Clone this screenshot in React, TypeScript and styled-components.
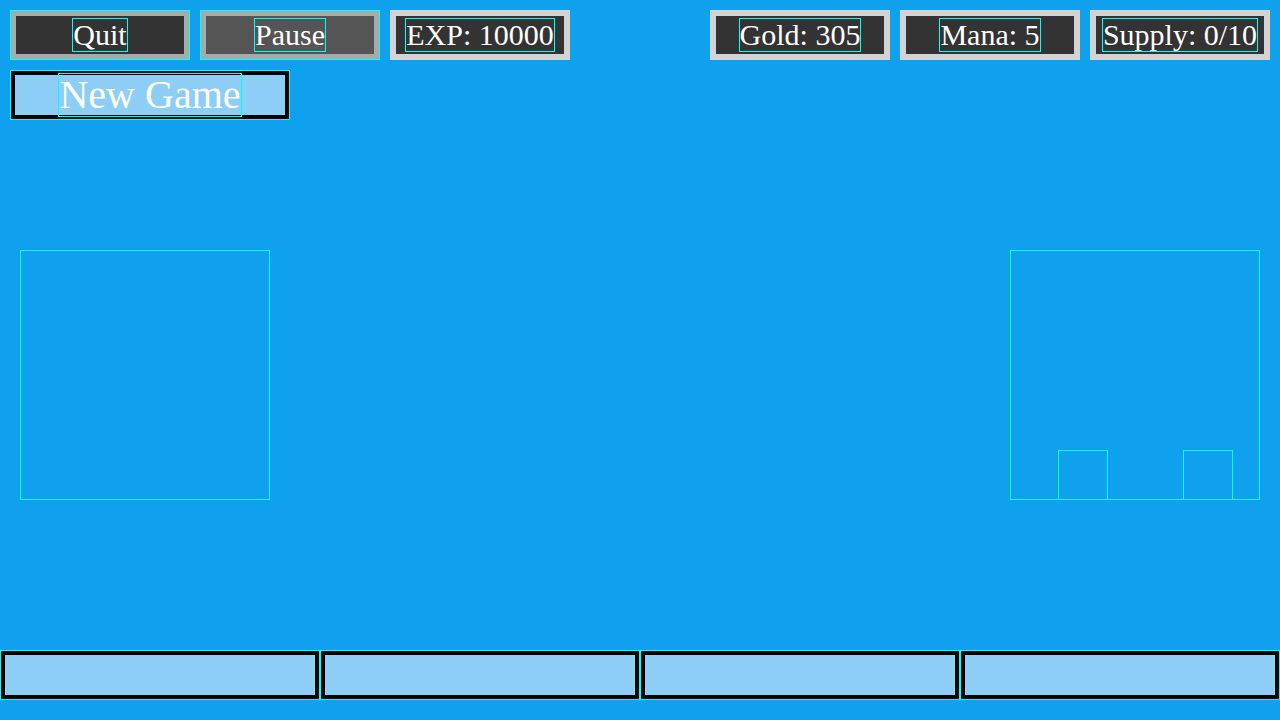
import React from "react";
import styled, { createGlobalStyle } from "styled-components";

const GlobalStyle = createGlobalStyle`
    * {
        box-sizing: border-box;
    }
    html, body {
        margin: 0;
        padding: 0;
        background: #0fa0ee;
    }
`;

const Screen = styled.div`
    width: 1280px;
    height: 720px;
    overflow: hidden;
    background: #0fa0ee;
    font-family: "Liberation Serif", "Times New Roman", serif;
    color: #ffffff;
    display: flex;
    flex-direction: column;
`;

const TopBar = styled.header`
    display: flex;
    justify-content: space-between;
    padding: 10px;
`;

const Group = styled.div`
    display: flex;
    gap: 10px;
`;

// stat boxes and the two top buttons share one shape, only edge and fill differ
const Box = styled.div<{ $edge: string; $fill: string; $outlined?: boolean }>`
    width: 180px;
    height: 50px;
    border: 6px solid ${(p) => p.$edge};
    background: ${(p) => p.$fill};
    display: flex;
    align-items: center;
    justify-content: center;
    font-size: 30px;
    outline: ${(p) => (p.$outlined ? "1px solid #00ffff" : "none")};
    outline-offset: -1px;
`;

const Label = styled.span`
    border: 1px solid #00ffff;
    white-space: nowrap;
    line-height: 1.07;
`;

const BigButton = styled.div`
    width: 280px;
    height: 50px;
    margin: 0 10px;
    border: 5px solid #000;
    outline: 1px solid #00ffff;
    outline-offset: -1px;
    background: #8ccef6;
    display: flex;
    align-items: center;
    justify-content: center;
    font-size: 40px;
`;

const Arena = styled.main`
    display: flex;
    justify-content: space-between;
    padding: 0 20px;
    margin-top: 130px;
`;

const Field = styled.div`
    width: 250px;
    height: 250px;
    outline: 1px solid #00ffff;
    outline-offset: -1px;
    display: flex;
    align-items: flex-end;
    gap: 75px;
    padding-left: 48px;
`;

const Unit = styled.div`
    width: 50px;
    height: 50px;
    border: 1px solid #00ffff;
`;

const Deck = styled.footer`
    display: grid;
    grid-template-columns: repeat(4, 320px);
    margin-top: 150px;
`;

const Card = styled.div`
    height: 50px;
    border: 5px solid #000;
    outline: 1px solid #00ffff;
    outline-offset: -1px;
    background: #8ccef6;
`;

const App: React.FC = () => {
    const stats = ["Gold: 305", "Mana: 5", "Supply: 0/10"];

    return (
        <Screen>
            <GlobalStyle />
            <TopBar>
                <Group>
                    <Box $edge="#a9a9a9" $fill="#333333" $outlined>
                        <Label>Quit</Label>
                    </Box>
                    <Box $edge="#a9a9a9" $fill="#555555" $outlined>
                        <Label>Pause</Label>
                    </Box>
                    <Box $edge="#d3d3d3" $fill="#333333">
                        <Label>EXP: 10000</Label>
                    </Box>
                </Group>
                <Group>
                    {stats.map((s) => (
                        <Box key={s} $edge="#d3d3d3" $fill="#333333">
                            <Label>{s}</Label>
                        </Box>
                    ))}
                </Group>
            </TopBar>
            <BigButton>
                <Label>New Game</Label>
            </BigButton>
            <Arena>
                <Field />
                <Field>
                    <Unit />
                    <Unit />
                </Field>
            </Arena>
            <Deck>
                {[1, 2, 3, 4].map((n) => (
                    <Card key={n} />
                ))}
            </Deck>
        </Screen>
    );
};

export default App;
